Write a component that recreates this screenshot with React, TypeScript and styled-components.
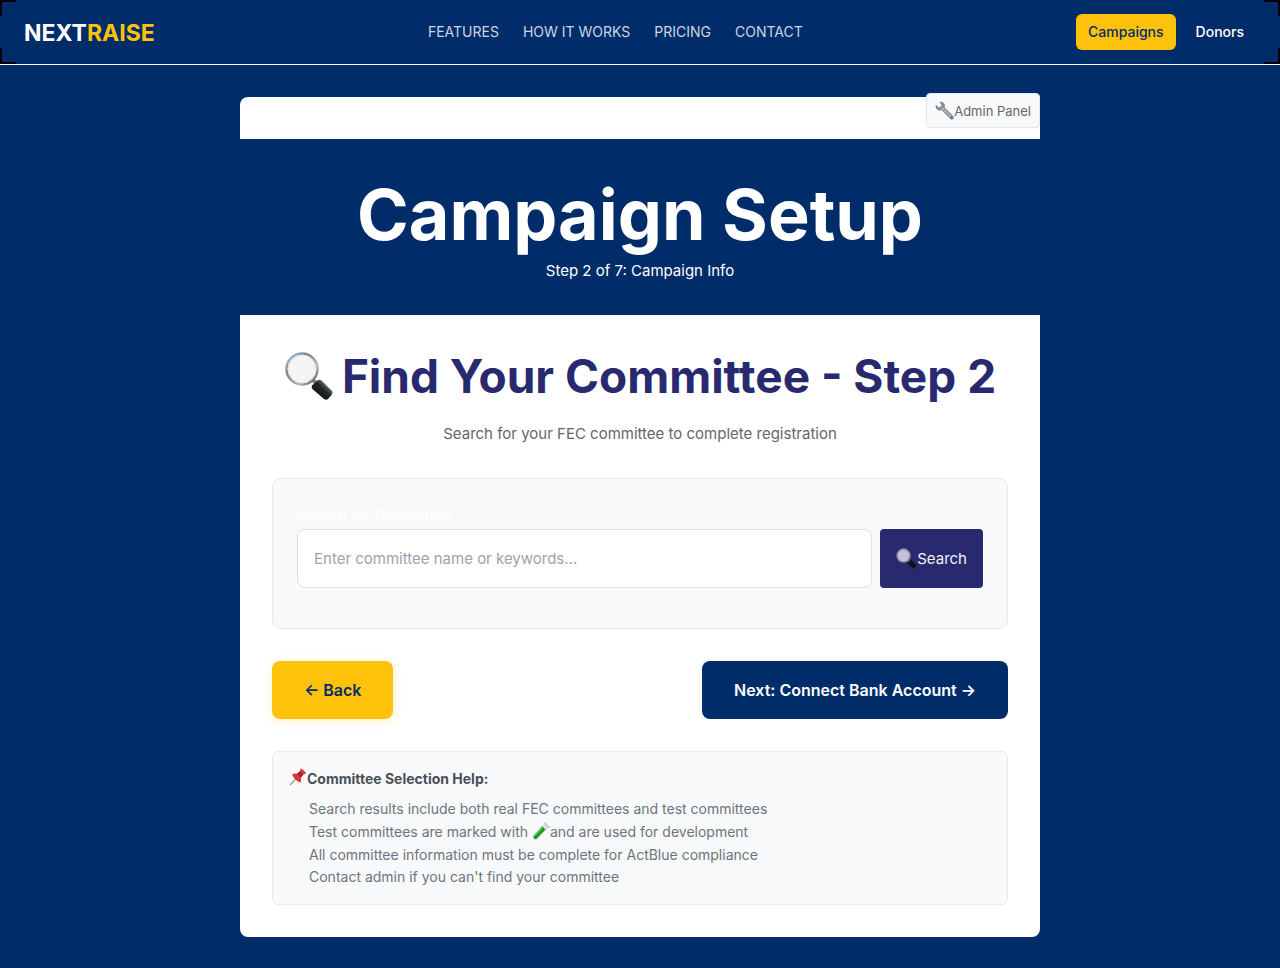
import React from "react";
import styled, { createGlobalStyle } from "styled-components";

const navy = "#002d69";
const gold = "#ffc20a";
const indigo = "#292970";

const GlobalStyle = createGlobalStyle`
  *, *::before, *::after { box-sizing: border-box; }
  body {
    margin: 0;
    background: ${navy};
    color: #fff;
    font-family: Inter, "Liberation Sans", sans-serif;
    font-size: 15px;
    line-height: 26px;
  }
  h1, h2, h3, p, ul { margin: 0; padding: 0; }
  button, input { font: inherit; }
  svg { flex: none; }
`;

const Header = styled.header`
  position: relative;
  display: flex;
  align-items: center;
  justify-content: space-between;
  height: 65px;
  padding: 0 24px;
  border-bottom: 1px solid #fff;
`;

const Corner = styled.span<{ $side: "left" | "right"; $edge: "top" | "bottom" }>`
  position: absolute;
  ${(p) => p.$side}: 0;
  ${(p) => p.$edge}: 0;
  width: 16px;
  height: 16px;
  border: 0 solid #000;
  border-${(p) => p.$side}-width: 2px;
  border-${(p) => p.$edge}-width: 2px;
`;

const Logo = styled.a`
  padding-top: 2px;
  color: #fff;
  font-size: 23px;
  font-weight: 700;
  line-height: 32px;
  text-decoration: none;
  span { color: ${gold}; }
`;

const Nav = styled.nav`
  display: flex;
  gap: 24px;
`;

const NavLink = styled.a`
  color: #ccd5e1;
  font-size: 14px;
  line-height: 20px;
  text-decoration: none;
`;

const Switcher = styled.div`
  display: flex;
  gap: 8px;
`;

const SwitchButton = styled.button<{ $active?: boolean }>`
  height: 36px;
  padding: 0 12px;
  border: 0;
  border-radius: 6px;
  background: ${(p) => (p.$active ? gold : "transparent")};
  color: ${(p) => (p.$active ? navy : "#fff")};
  font-size: 14px;
  font-weight: 500;
  line-height: 20px;
`;

const Main = styled.main`
  padding: 32px 16px;
`;

const Card = styled.div`
  position: relative;
  max-width: 800px;
  margin: 0 auto;
  padding-top: 42px;
  border-radius: 8px;
  background: #fff;
`;

const AdminButton = styled.button`
  position: absolute;
  top: -4px;
  right: 0;
  display: flex;
  align-items: center;
  height: 35px;
  padding: 0 8px;
  border: 1px solid #e3e6ea;
  border-radius: 4px;
  background: #f8f9fa;
  color: #666;
  font-size: 13px;
  line-height: 20px;
`;

const Banner = styled.div`
  padding: 32px;
  background: ${navy};
  text-align: center;
`;

const Title = styled.h1`
  font-size: 70px;
  font-weight: 700;
  line-height: 88px;
`;

const Step = styled.p`
  line-height: 24px;
`;

const Content = styled.div`
  display: flex;
  flex-direction: column;
  gap: 32px;
  padding: 32px;
`;

const Intro = styled.div`
  display: flex;
  flex-direction: column;
  align-items: center;
  gap: 16px;
`;

const Heading = styled.h2`
  display: flex;
  align-items: center;
  gap: 8px;
  color: ${indigo};
  font-size: 46px;
  font-weight: 700;
  line-height: 58px;
`;

const Lead = styled.p`
  color: #666;
  line-height: 25px;
`;

const SearchBox = styled.form`
  padding: 24px 24px 40px;
  border: 1px solid #e7eaee;
  border-radius: 8px;
  background: #f8f9fb;
`;

const Label = styled.label`
  display: block;
  color: #fff;
`;

const SearchRow = styled.div`
  display: flex;
  gap: 8px;
`;

const SearchInput = styled.input`
  flex: 1;
  min-width: 0;
  height: 59px;
  padding: 0 16px;
  border: 1px solid #dee2e6;
  border-radius: 8px;
  background: #fff;
  color: #333;
  &::placeholder { color: #9ca3af; opacity: 1; }
`;

const SearchButton = styled.button`
  display: flex;
  align-items: center;
  height: 59px;
  padding: 0 16px;
  border: 0;
  border-radius: 4px;
  background: ${indigo};
  color: #f1f1f6;
`;

const Actions = styled.div`
  display: flex;
  justify-content: space-between;
`;

const ActionButton = styled.button<{ $primary?: boolean }>`
  height: 58px;
  padding: 0 32px;
  border: 0;
  border-radius: 8px;
  background: ${(p) => (p.$primary ? navy : gold)};
  color: ${(p) => (p.$primary ? "#fff" : navy)};
  font-size: 16px;
  font-weight: 600;
  box-shadow: ${(p) => (p.$primary ? "none" : "0 2px 8px rgba(255, 194, 10, 0.25)")};
`;

const Help = styled.section`
  padding: 16px;
  border: 1px solid #e9ecef;
  border-radius: 6px;
  background: #f8f9fb;
  font-size: 14px;
  line-height: 22px;
`;

const HelpTitle = styled.h3`
  display: flex;
  align-items: center;
  margin-bottom: 8px;
  color: #495057;
  font-size: 14px;
  font-weight: 700;
`;

const HelpList = styled.ul`
  padding-left: 20px;
  color: #6c757d;
  list-style: none;
`;

const HelpItem = styled.li`
  display: flex;
  align-items: center;
  white-space: pre-wrap;
`;

const Magnifier = ({ size, muted }: { size: number; muted?: boolean }) => (
  <svg width={size} height={size} viewBox="0 0 50 50" aria-hidden="true">
    <defs>
      <linearGradient id={`rim${size}`} x1="0" y1="0" x2="1" y2="1">
        <stop offset="0" stopColor="#a9d0f5" />
        <stop offset="0.35" stopColor="#77808a" />
        <stop offset="0.7" stopColor="#b5b8ba" />
        <stop offset="1" stopColor="#3c4144" />
      </linearGradient>
      <linearGradient id={`grip${size}`} x1="0" y1="1" x2="1" y2="0">
        <stop offset="0" stopColor="#050505" />
        <stop offset="0.55" stopColor="#24282a" />
        <stop offset="0.75" stopColor="#6a6f72" />
        <stop offset="1" stopColor="#0c0c0c" />
      </linearGradient>
    </defs>
    <path d="M29 29l7 7" stroke="#777b7e" strokeWidth="4" />
    <path d="M28 34.500l6-5.500q2-1 4 1l9.500 9.500q2 2 0 4.500l-3.500 4q-2 1.500-4 0L29 38.500q-2-2-1-4z" fill={muted ? "#111" : `url(#grip${size})`} />
    <circle cx="18" cy="18" r="15.500" fill={muted ? "#c4c0d9" : "#f4f4f4"} stroke={muted ? "#8d8b96" : `url(#rim${size})`} strokeWidth={muted ? 3.5 : 2.5} />
    <circle cx="18" cy="18" r="14" fill="none" stroke={muted ? "#aaa7bd" : "#dcdedf"} strokeWidth="1" />
  </svg>
);

const Wrench = () => (
  <svg width="19" height="20" viewBox="0 0 19 20" aria-hidden="true">
    <path d="M1 4.500Q.5 7.500 3 8.800q2 .8 3.600-.2l8.700 9q1.500 1.400 2.800.1 1-1.300-.3-2.600L9.200 6.600q1-2.200-.5-4.200Q7.200.800 5 1.300l2 2.700-.8 2.200-2.500.4z" fill="#8d9198" stroke="#666b73" strokeWidth=".6" />
    <path d="M7.200 7l8.800 8.800" stroke="#d4d6da" strokeWidth="1" />
    <circle cx="16.600" cy="16.500" r=".8" fill="#594348" />
  </svg>
);

const Pushpin = () => (
  <svg width="18" height="22" viewBox="0 0 18 22" aria-hidden="true">
    <path d="M1 17.200L7 10.500" stroke="#8b9297" strokeWidth="1.200" />
    <path d="M3 6.700q2.500-1.500 5-1L11.300 3q-.6-1.600.8-2.500 2.600.7 4.900 4.500-.7 1.500-2.600 1.200L12 9.600q.7 2.800-.6 5-5-1.800-8.400-7.900z" fill="#d8343a" />
    <path d="M8 5.700q1.200 2.700 4 3.900l2.400-3.400Q12.300 5.200 11.300 3z" fill="#a8242c" />
    <path d="M12.500 1.300q2 .9 3.700 3.500" fill="none" stroke="#f2766f" strokeWidth="1" />
  </svg>
);

const TestTube = () => (
  <svg width="18" height="24" viewBox="0 -2 18 24" aria-hidden="true">
    <path d="M12 2.500l3.500 3.300L5 16.700q-1.700 1.300-3.200 0-1.400-1.500 0-3.300z" fill="#dce9de" stroke="#a9b9ae" strokeWidth=".6" />
    <path d="M10.200 4.600l3.300 3L4.800 16.400q-1.500 1-2.700 0-1.100-1.200 0-2.700z" fill="#129b25" />
    <path d="M9.800 6.300L3 13.600" stroke="#5bd65d" strokeWidth="1.100" />
    <path d="M12.500 1l4.500 4.200" stroke="#c7cecb" strokeWidth="1.700" strokeLinecap="round" />
  </svg>
);

const links = ["FEATURES", "HOW IT WORKS", "PRICING", "CONTACT"];

export default function App() {
  return (
    <>
      <GlobalStyle />
      <Header>
        <Corner $side="left" $edge="top" />
        <Corner $side="right" $edge="top" />
        <Corner $side="left" $edge="bottom" />
        <Corner $side="right" $edge="bottom" />
        <Logo href="#">NEXT<span>RAISE</span></Logo>
        <Nav>
          {links.map((text) => <NavLink key={text} href="#">{text}</NavLink>)}
        </Nav>
        <Switcher>
          <SwitchButton type="button" $active>Campaigns</SwitchButton>
          <SwitchButton type="button">Donors</SwitchButton>
        </Switcher>
      </Header>
      <Main>
        <Card>
          <AdminButton type="button"><Wrench />Admin Panel</AdminButton>
          <Banner>
            <Title>Campaign Setup</Title>
            <Step>Step 2 of 7: Campaign Info</Step>
          </Banner>
          <Content>
            <Intro>
              <Heading><Magnifier size={50} />Find Your Committee - Step 2</Heading>
              <Lead>Search for your FEC committee to complete registration</Lead>
            </Intro>
            <SearchBox onSubmit={(e) => e.preventDefault()}>
              <Label htmlFor="committee">Search for Committee</Label>
              <SearchRow>
                <SearchInput id="committee" type="text" placeholder="Enter committee name or keywords..." />
                <SearchButton type="submit"><Magnifier size={21} muted />Search</SearchButton>
              </SearchRow>
            </SearchBox>
            <Actions>
              <ActionButton type="button">← Back</ActionButton>
              <ActionButton type="button" $primary>Next: Connect Bank Account →</ActionButton>
            </Actions>
            <Help>
              <HelpTitle><Pushpin />Committee Selection Help:</HelpTitle>
              <HelpList>
                <HelpItem>Search results include both real FEC committees and test committees</HelpItem>
                <HelpItem>Test committees are marked with <TestTube />and are used for development</HelpItem>
                <HelpItem>All committee information must be complete for ActBlue compliance</HelpItem>
                <HelpItem>Contact admin if you can't find your committee</HelpItem>
              </HelpList>
            </Help>
          </Content>
        </Card>
      </Main>
    </>
  );
}
